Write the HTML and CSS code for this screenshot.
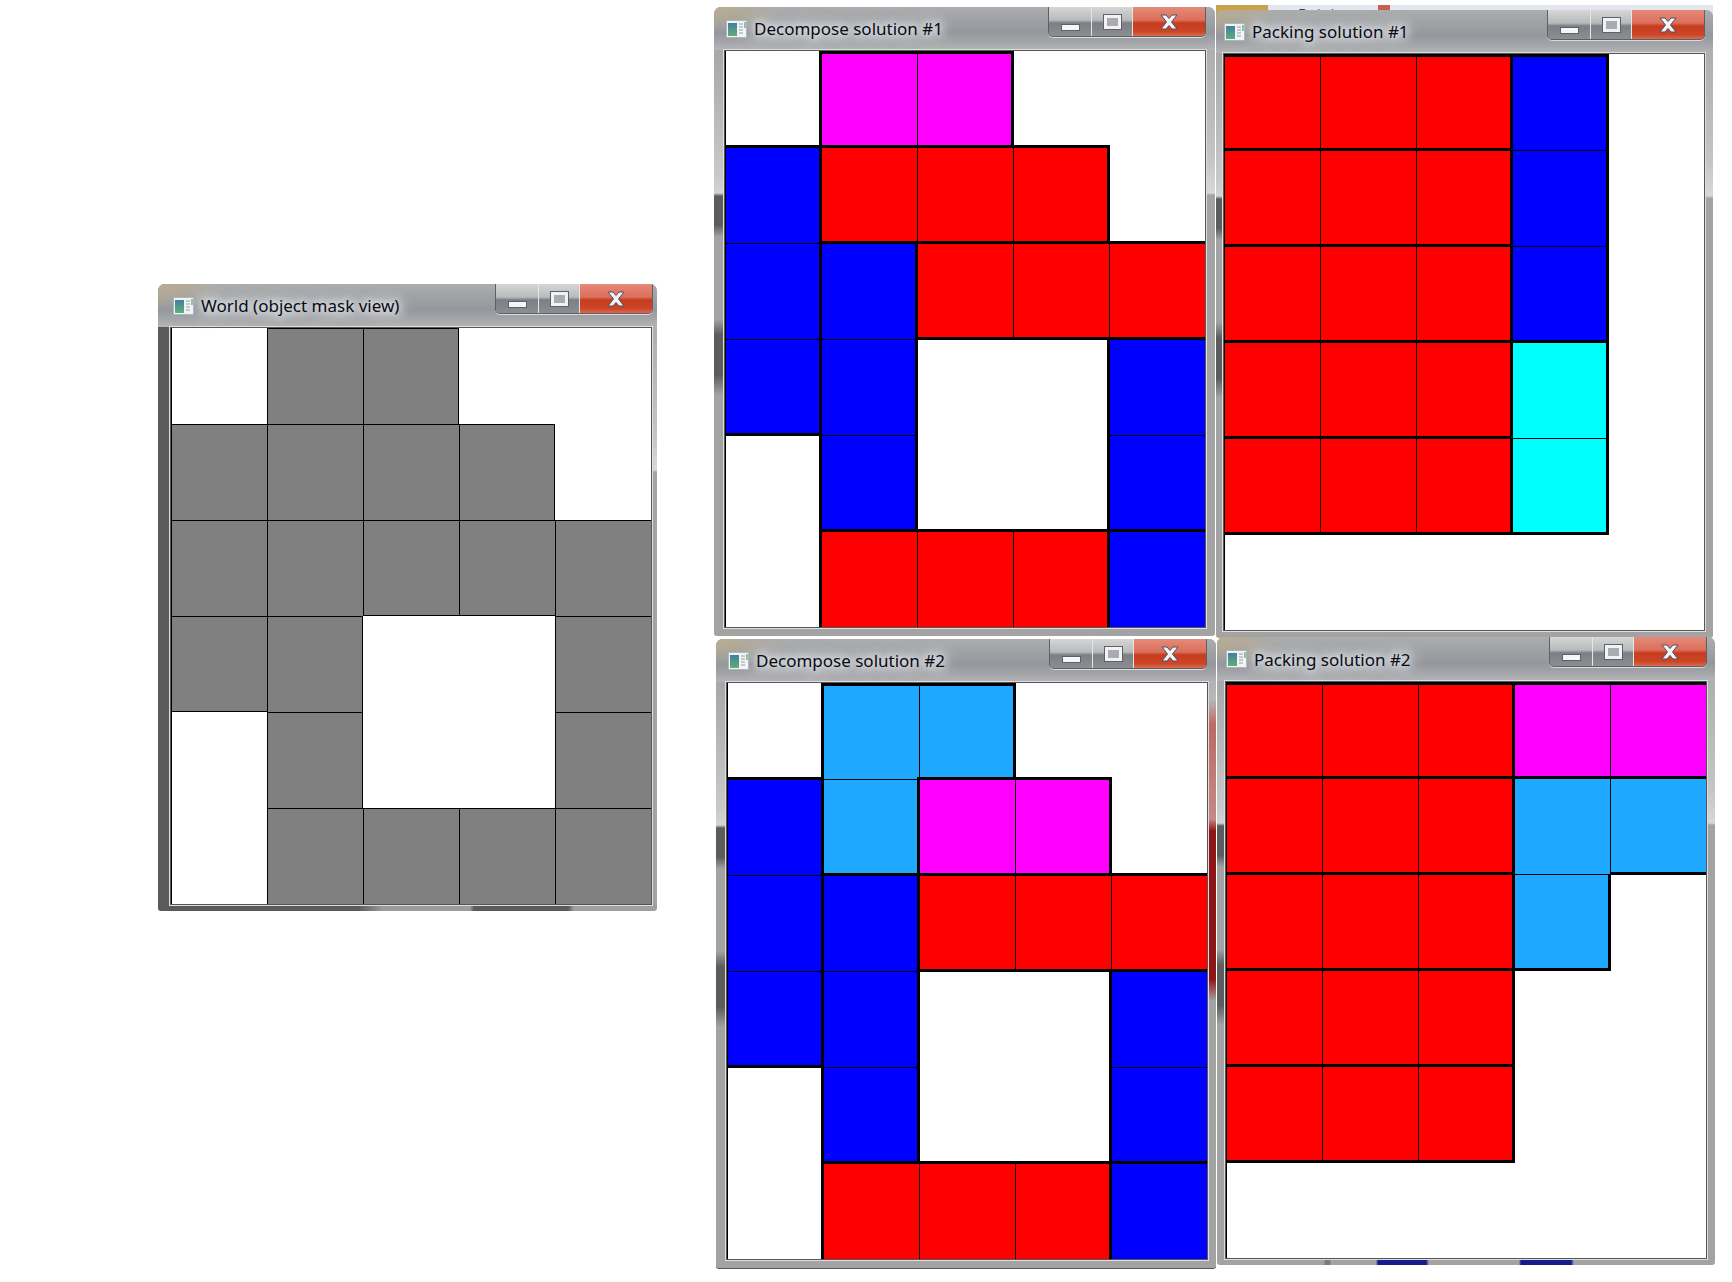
FILE: index.html
```html
<!DOCTYPE html>
<html lang="en">
<head>
    <meta charset="UTF-8">
    <title>Object mask decomposition and packing</title>
    <link rel="stylesheet" href="styles.css">
</head>
<body>
    <svg class="defs" width="0" height="0">
        <defs>
            <linearGradient id="appfill" x1="0" y1="0" x2="0" y2="1">
                <stop offset="0" stop-color="#3f7fa0"/>
                <stop offset="1" stop-color="#5fae78"/>
            </linearGradient>
            <symbol id="appicon" viewBox="0 0 21 18">
                <rect x="0.5" y="0.5" width="20" height="17" rx="1" fill="#f2f4f6" stroke="#aeb4ba"/>
                <rect x="2" y="3" width="9" height="13" fill="url(#appfill)"/>
                <path d="M13 4h4M13 7h4M13 10h4M13 13h4" stroke="#b4bac0" stroke-width="1.4"/>
                <path d="M19 2v6" stroke="#3aa06a" stroke-width="1.2"/>
            </symbol>
            <symbol id="closex" viewBox="0 0 18 16">
                <path d="M1 1h5l3 3.500L12 1h5l-5.500 7L17 15h-5L9 11.500 6 15H1l5.500-7z" fill="#f4f4f6" stroke="#4c5060" stroke-width="1"/>
            </symbol>
        </defs>
    </svg>

    <!-- bit of the desktop showing above packing #1 -->
    <div class="ribbon"><span class="ribbon-tan"></span><span class="ribbon-text">Rotate ▾</span><span class="ribbon-red"></span></div>

    <section class="window thin win-world">
        <header class="titlebar">
            <svg class="icon"><use href="#appicon"/></svg>
            <span class="title">World (object mask view)</span>
            <div class="buttons">
                <span class="btn min"><i></i></span>
                <span class="btn max"><i></i></span>
                <span class="btn close"><svg><use href="#closex"/></svg></span>
            </div>
        </header>
        <div class="grid">
            <div class="c"></div><div class="c g et el"></div><div class="c g et er"></div><div class="c"></div><div class="c"></div>
            <div class="c g et el"></div><div class="c g"></div><div class="c g"></div><div class="c g et er"></div><div class="c"></div>
            <div class="c g"></div><div class="c g"></div><div class="c g eb"></div><div class="c g eb"></div><div class="c g et"></div>
            <div class="c g eb"></div><div class="c g er"></div><div class="c"></div><div class="c"></div><div class="c g"></div>
            <div class="c"></div><div class="c g el er"></div><div class="c"></div><div class="c"></div><div class="c g"></div>
            <div class="c"></div><div class="c g el"></div><div class="c g et"></div><div class="c g et"></div><div class="c g"></div>
        </div>
    </section>

    <section class="window win-dec1">
        <header class="titlebar">
            <svg class="icon"><use href="#appicon"/></svg>
            <span class="title">Decompose solution #1</span>
            <div class="buttons">
                <span class="btn min"><i></i></span>
                <span class="btn max"><i></i></span>
                <span class="btn close"><svg><use href="#closex"/></svg></span>
            </div>
        </header>
        <div class="grid">
            <div class="c"></div><div class="c m et el"></div><div class="c m et er"></div><div class="c"></div><div class="c"></div>
            <div class="c b et el"></div><div class="c r et el"></div><div class="c r et"></div><div class="c r et er"></div><div class="c"></div>
            <div class="c b el"></div><div class="c b et el"></div><div class="c r et el eb"></div><div class="c r et eb"></div><div class="c r et"></div>
            <div class="c b el eb"></div><div class="c b el er"></div><div class="c"></div><div class="c"></div><div class="c b et el"></div>
            <div class="c"></div><div class="c b el er"></div><div class="c"></div><div class="c"></div><div class="c b el"></div>
            <div class="c"></div><div class="c r et el"></div><div class="c r et"></div><div class="c r et"></div><div class="c b et el"></div>
        </div>
    </section>

    <section class="window win-pack1">
        <header class="titlebar">
            <svg class="icon"><use href="#appicon"/></svg>
            <span class="title">Packing solution #1</span>
            <div class="buttons">
                <span class="btn min"><i></i></span>
                <span class="btn max"><i></i></span>
                <span class="btn close"><svg><use href="#closex"/></svg></span>
            </div>
        </header>
        <div class="grid">
            <div class="c r et el"></div><div class="c r et"></div><div class="c r et"></div><div class="c b et el er"></div><div class="c"></div>
            <div class="c r et el"></div><div class="c r et"></div><div class="c r et"></div><div class="c b el er"></div><div class="c"></div>
            <div class="c r et el"></div><div class="c r et"></div><div class="c r et"></div><div class="c b el er"></div><div class="c"></div>
            <div class="c r et el"></div><div class="c r et"></div><div class="c r et"></div><div class="c y et el er"></div><div class="c"></div>
            <div class="c r et el eb"></div><div class="c r et eb"></div><div class="c r et eb"></div><div class="c y el er eb"></div><div class="c"></div>
            <div class="c"></div><div class="c"></div><div class="c"></div><div class="c"></div><div class="c"></div>
        </div>
    </section>

    <section class="window win-dec2">
        <header class="titlebar">
            <svg class="icon"><use href="#appicon"/></svg>
            <span class="title">Decompose solution #2</span>
            <div class="buttons">
                <span class="btn min"><i></i></span>
                <span class="btn max"><i></i></span>
                <span class="btn close"><svg><use href="#closex"/></svg></span>
            </div>
        </header>
        <div class="grid">
            <div class="c"></div><div class="c l et el"></div><div class="c l et er"></div><div class="c"></div><div class="c"></div>
            <div class="c b et el"></div><div class="c l el"></div><div class="c m et el"></div><div class="c m et er"></div><div class="c"></div>
            <div class="c b el"></div><div class="c b et el"></div><div class="c r et el eb"></div><div class="c r et eb"></div><div class="c r et"></div>
            <div class="c b el eb"></div><div class="c b el er"></div><div class="c"></div><div class="c"></div><div class="c b et el"></div>
            <div class="c"></div><div class="c b el er"></div><div class="c"></div><div class="c"></div><div class="c b el"></div>
            <div class="c"></div><div class="c r et el"></div><div class="c r et"></div><div class="c r et"></div><div class="c b et el"></div>
        </div>
    </section>

    <section class="window win-pack2">
        <header class="titlebar">
            <svg class="icon"><use href="#appicon"/></svg>
            <span class="title">Packing solution #2</span>
            <div class="buttons">
                <span class="btn min"><i></i></span>
                <span class="btn max"><i></i></span>
                <span class="btn close"><svg><use href="#closex"/></svg></span>
            </div>
        </header>
        <div class="grid">
            <div class="c r et el"></div><div class="c r et"></div><div class="c r et"></div><div class="c m et el"></div><div class="c m et"></div>
            <div class="c r et el"></div><div class="c r et"></div><div class="c r et"></div><div class="c l et el"></div><div class="c l et eb"></div>
            <div class="c r et el"></div><div class="c r et"></div><div class="c r et"></div><div class="c l el er eb"></div><div class="c"></div>
            <div class="c r et el"></div><div class="c r et"></div><div class="c r et er"></div><div class="c"></div><div class="c"></div>
            <div class="c r et el eb"></div><div class="c r et eb"></div><div class="c r et er eb"></div><div class="c"></div><div class="c"></div>
            <div class="c"></div><div class="c"></div><div class="c"></div><div class="c"></div><div class="c"></div>
        </div>
    </section>
</body>
</html>
```

FILE: styles.css
```css
body {
    margin: 0;
    background-color: white;
    font-family: "Noto Sans", "Open Sans", sans-serif;
    min-height: 1282px;
    overflow: hidden;
}
.defs {
    position: absolute;
}

/* windows sit on a free desktop, so each one gets its own place */
.window {
    --edge: 3px;
    --out-lt: -2px;
    --out-rb: -1px;
    --pad-left: 10px;
    --pad-right: 9px;
    --icon-left: 12px;
    --title-h: 43px;
    --side-left: linear-gradient(180deg, #9c9c9c 0, #c9c9c9 170px, #d4d4d4 186px, #5c5c5c 189px, #5c5c5c 218px, #a3a3a3 230px, #a3a3a3 312px, #5c5c5c 328px, #5c5c5c 368px, #a3a3a3 388px);
    --side-right: linear-gradient(180deg, #a6a6a6 0, #c4c4c4 150px, #d8d8d8 186px, #a3a3a3 188px);
    --side-bottom: linear-gradient(#a3a3a3, #a3a3a3);
    position: absolute;
    width: 501px;
    height: 628px;
    box-sizing: border-box;
    padding-left: var(--pad-left);
    border-radius: 7px 7px 3px 3px;
    overflow: hidden;
    background:
        var(--side-bottom) left bottom / 100% 8px no-repeat,
        var(--side-left) left top / 12px 100% no-repeat,
        var(--side-right) right top / 12px 100% no-repeat,
        #a3a3a3;
}
.win-world {
    --pad-left: 12px;
    --pad-right: 4px;
    --icon-left: 15px;
    --side-left: linear-gradient(#5a5a5a, #5a5a5a);
    --side-bottom: linear-gradient(90deg, #5a5a5a 0, #5a5a5a 200px, #9c9c9c 225px, #9c9c9c 312px, #5a5a5a 316px, #5a5a5a 410px, #a0a0a0 416px);
    left: 158px;
    top: 284px;
    width: 499px;
    height: 627px;
}
.win-dec1 {
    left: 714px;
    top: 7px;
    height: 629px;
}
.win-pack1 {
    --pad-left: 7px;
    --pad-right: 8px;
    --icon-left: 8px;
    left: 1216px;
    top: 10px;
    width: 497px;
}
.win-dec2 {
    --side-right: linear-gradient(180deg, #a6a6a6 0, #b8b8b8 60px, #bb6a66 86px, #c48a86 180px, #8e1616 192px, #8e1616 340px, #a3a3a3 362px);
    left: 716px;
    top: 639px;
    width: 500px;
    height: 630px;
    border-bottom: 1px solid #555;
}
.win-pack2 {
    --pad-left: 8px;
    --pad-right: 8px;
    --icon-left: 9px;
    --title-h: 44px;
    --side-bottom: linear-gradient(90deg, #a3a3a3 0, #a3a3a3 107px, #7c7c7c 108px, #7c7c7c 113px, #a3a3a3 114px, #a3a3a3 159px, #161c8c 161px, #161c8c 209px, #a3a3a3 212px, #a3a3a3 302px, #161c8c 304px, #161c8c 354px, #a3a3a3 357px);
    left: 1217px;
    top: 637px;
    width: 498px;
}

.titlebar {
    display: flex;
    align-items: center;
    height: var(--title-h);
    margin-left: calc(0px - var(--pad-left));
    padding-left: var(--icon-left);
    padding-right: var(--pad-right);
    box-sizing: border-box;
    background:
        radial-gradient(ellipse 70px 26px at 0 0, #b9ab8e 0, rgba(185, 171, 142, 0) 100%),
        linear-gradient(180deg, #abadaf 0, #94979c 60%, #a6a8ab 85%, #b4b5b7 100%);
}
.icon {
    width: 21px;
    height: 18px;
    flex: none;
    margin-right: 7px;
}
.title {
    font-size: 17px;
    color: #0a0a14;
    white-space: nowrap;
    text-shadow: 0 0 6px #eceef0, 0 0 10px #eceef0, 0 0 14px #eceef0, 0 0 20px #eceef0, 0 0 26px rgba(236, 238, 240, 0.8);
}

.buttons {
    display: flex;
    align-self: flex-start;
    margin-left: auto;
    height: 30px;
    box-sizing: border-box;
    border: 1px solid #5e6066;
    border-top: 0;
    border-radius: 0 0 5px 5px;
    overflow: hidden;
    box-shadow: 0 1px 0 #dcdcdc;
}
.btn {
    display: flex;
    justify-content: center;
    box-sizing: border-box;
    border-right: 1px solid #e6e6e6;
    background: linear-gradient(180deg, #d6d6d6 0, #b8babb 45%, #7c7f84 55%, #8c8e92 100%);
}
.btn.min {
    width: 43px;
}
.btn.max {
    width: 41px;
}
.btn.close {
    width: 72px;
    border-right: 0;
    background: linear-gradient(180deg, #e58a78 0, #db6f5b 45%, #c63c1f 55%, #cc4626 85%, #d96b52 100%);
}
.btn.min i {
    width: 17px;
    height: 5px;
    margin-top: 17px;
    background-color: #f6f6f6;
    border: 1px solid #5c6070;
}
.btn.max i {
    width: 11px;
    height: 8px;
    margin-top: 8px;
    background-color: #a9abb0;
    border: 3px solid #f2f2f4;
    outline: 1px solid #5c6070;
}
.btn.close svg {
    width: 18px;
    height: 16px;
    margin-top: 7px;
}

.grid {
    display: grid;
    grid-template-columns: repeat(5, 96px);
    grid-template-rows: repeat(6, 96px);
    width: 480px;
    border: 1px solid #555;
    background-color: white;
    box-shadow: 0 0 0 1px #dedede;
}
.c {
    box-sizing: border-box;
    border: 0 solid black;
}
.g, .r, .b, .m, .y, .l {
    border-width: 1px 0 0 1px;
}
.g { background-color: #808080; }
.r { background-color: #ff0000; }
.b { background-color: #0000ff; }
.m { background-color: #ff00ff; }
.y { background-color: #00ffff; }
.l { background-color: #1fa8ff; }
.thin {
    --edge: 1px;
    --out-lt: 0px;
    --out-rb: 0px;
}

/* piece outlines straddle the cell line, so they reach out of the cell */
.et { border-top-width: var(--edge); margin-top: var(--out-lt); }
.el { border-left-width: var(--edge); margin-left: var(--out-lt); }
.er { border-right-width: var(--edge); margin-right: var(--out-rb); }
.eb { border-bottom-width: var(--edge); margin-bottom: var(--out-rb); }
.c:nth-child(5n+1) { border-left-width: 1px; margin-left: 0; }
.c:nth-child(-n+5) { margin-top: 0; }

.ribbon {
    position: absolute;
    left: 1216px;
    top: 5px;
    width: 497px;
    height: 12px;
    background-color: #e3e7ed;
    font-size: 15px;
    line-height: 17px;
    color: #33405a;
}
.ribbon-tan {
    position: absolute;
    left: 0;
    top: 0;
    width: 52px;
    height: 12px;
    background-color: #c9a24e;
}
.ribbon-text {
    position: absolute;
    left: 82px;
    top: 0;
}
.ribbon-red {
    position: absolute;
    left: 162px;
    top: 0;
    width: 12px;
    height: 12px;
    background-color: #c9604e;
}
```
